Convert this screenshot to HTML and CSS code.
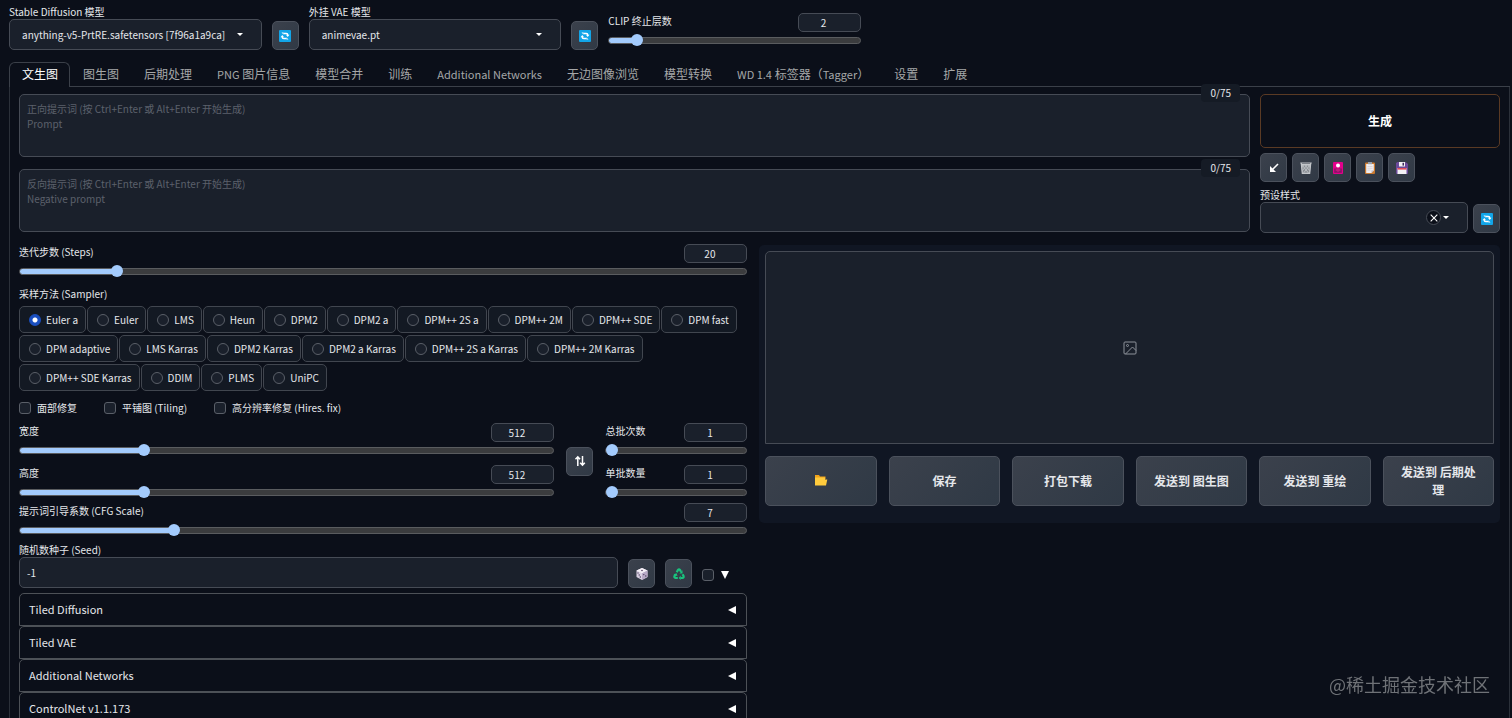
FILE: index.html
```
<!DOCTYPE html>
<html lang="zh-CN">
<head>
  <meta charset="UTF-8" />
  <meta name="viewport" content="width=device-width, initial-scale=1.0" />
  <title>Stable Diffusion</title>
  <link rel="stylesheet" href="styles.css">
</head>
<body>
  <!-- shared icons -->
  <svg class="sprite" aria-hidden="true">
    <symbol id="i-refresh" viewBox="0 0 12 12">
      <rect width="12" height="12" rx="1" fill="#12a5e8"/>
      <path d="M4.500 3.500h2.700a1.600 1.600 0 0 1 1.600 1.600M7.500 8.500H4.800a1.600 1.600 0 0 1-1.600-1.600" fill="none" stroke="#fff" stroke-width="1.400"/>
      <path d="M6.900 4.800h3.600L8.700 7zM1.500 7.200h3.600L3.300 5zM2.500 2.500h2v2zM9.500 9.500h-2v-2z" fill="#fff"/>
    </symbol>
  </svg>

  <header class="quick">
    <div class="field">
      <label for="model">Stable Diffusion 模型</label>
      <div class="select"><select id="model"><option>anything-v5-PrtRE.safetensors [7f96a1a9ca]</option></select></div>
    </div>
    <button class="tool" aria-label="刷新模型"><svg><use href="#i-refresh"/></svg></button>
    <div class="field">
      <label for="vae">外挂 VAE 模型</label>
      <div class="select"><select id="vae"><option>animevae.pt</option></select></div>
    </div>
    <button class="tool" aria-label="刷新 VAE"><svg><use href="#i-refresh"/></svg></button>
    <div class="slider clip">
      <label for="clip">CLIP 终止层数</label>
      <input class="num" type="number" value="2" aria-label="CLIP">
      <input id="clip" type="range" min="1" max="12" value="2" style="--fill: 10%">
    </div>
  </header>

  <nav class="tabs">
    <button class="tab active">文生图</button>
    <button class="tab">图生图</button>
    <button class="tab">后期处理</button>
    <button class="tab"><span class="latin">PNG</span> 图片信息</button>
    <button class="tab">模型合并</button>
    <button class="tab">训练</button>
    <button class="tab"><span class="latin">Additional Networks</span></button>
    <button class="tab">无边图像浏览</button>
    <button class="tab">模型转换</button>
    <button class="tab"><span class="latin">WD 1.4</span> 标签器（<span class="latin">Tagger</span>）</button>
    <button class="tab">设置</button>
    <button class="tab">扩展</button>
  </nav>

  <main class="panel">
    <section class="top">
      <div class="prompts">
        <div class="prompt">
          <textarea aria-label="正向提示词" placeholder="正向提示词 (按 Ctrl+Enter 或 Alt+Enter 开始生成)&#10;Prompt"></textarea>
          <span class="counter">0/75</span>
        </div>
        <div class="prompt">
          <textarea aria-label="反向提示词" placeholder="反向提示词 (按 Ctrl+Enter 或 Alt+Enter 开始生成)&#10;Negative prompt"></textarea>
          <span class="counter">0/75</span>
        </div>
      </div>

      <div class="actions">
        <button class="generate">生成</button>
        <div class="tools">
          <button class="tool" aria-label="读取参数">
            <svg viewBox="0 0 12 12"><path d="M10 2 4 8" fill="none" stroke="#fff" stroke-width="1.600"/><path d="M2 4v6h6z" fill="#fff"/></svg>
          </button>
          <button class="tool" aria-label="清空">
            <svg viewBox="0 0 12 12"><path d="M1 2h10l-1.200 9.500H2.200z" fill="#8b8f95"/><path d="M.3 1h11.400M1.200 2.600h9.600M1.300 1.500l1 9.800h7.400l1-9.800" fill="none" stroke="#c3c6ca" stroke-width="1.200"/><path d="M2 3l6.500 8M4.500 2.500l5 6M7.500 2.500l2.500 3M10 3l-6.500 8M7.500 2.500l-5 6M4.500 2.500L2 5.500" stroke="#c3c6ca" stroke-width=".8"/></svg>
          </button>
          <button class="tool" aria-label="附加网络">
            <svg viewBox="0 0 12 12"><rect x="1" width="10" height="12" rx="1" fill="#e3008c"/><rect x="2.200" y="6.500" width="7.600" height="4.300" fill="#8a1266"/><circle cx="6" cy="3.600" r="2" fill="#fff"/><path d="M3 8l3-2 3 2-3 2z" fill="#c2187e"/></svg>
          </button>
          <button class="tool" aria-label="套用样式">
            <svg viewBox="0 0 12 12"><rect x="1" y=".5" width="10" height="11.500" rx="1" fill="#c9792f"/><path d="M2.200 2h7.600v6.500L7.500 11H2.200z" fill="#f1eef0"/><path d="M7.500 11V8.500h2.300z" fill="#b9b4bd"/><rect x="4" width="4" height="2.200" fill="#9aa0a8"/><path d="M3.500 4.500h5M3.500 6.300h5M3.500 8.100h3" stroke="#cbc6ce" stroke-width=".6"/></svg>
          </button>
          <button class="tool" aria-label="保存样式">
            <svg viewBox="0 0 12 12"><path d="M1.500 0H9.500L12 2v9a1 1 0 0 1-1 1H1a1 1 0 0 1-1-1V1z" fill="#6b4a9a"/><rect x="3" width="6" height="4.500" fill="#f3f1f5"/><rect x="6.500" y=".8" width="1.500" height="2.800" fill="#3d2b5c"/><rect x="1.500" y="6" width="9" height="6" fill="#f3f1f5"/><rect x="1.500" y="6" width="9" height="1.600" fill="#e14b5a"/></svg>
          </button>
        </div>
        <div class="styles">
          <div class="field">
            <label for="preset">预设样式</label>
            <div class="select preset">
              <select id="preset"><option></option></select>
              <button class="clear" aria-label="清除"><svg viewBox="0 0 12 12"><path d="M1 1l10 10M11 1L1 11" stroke="#fff" stroke-width="1.600"/></svg></button>
            </div>
          </div>
          <button class="tool" aria-label="刷新样式"><svg><use href="#i-refresh"/></svg></button>
        </div>
      </div>
    </section>

    <section class="main">
      <div class="settings">
        <div class="slider steps">
          <label for="steps">迭代步数 (Steps)</label>
          <input class="num" type="number" value="20" aria-label="Steps">
          <input id="steps" type="range" min="1" max="150" value="20" style="--fill: 13%">
        </div>

        <fieldset class="sampler">
          <legend>采样方法 (Sampler)</legend>
          <div class="chips">
            <label><input type="radio" name="sampler" checked>Euler a</label>
            <label><input type="radio" name="sampler">Euler</label>
            <label><input type="radio" name="sampler">LMS</label>
            <label><input type="radio" name="sampler">Heun</label>
            <label><input type="radio" name="sampler">DPM2</label>
            <label><input type="radio" name="sampler">DPM2 a</label>
            <label><input type="radio" name="sampler">DPM++ 2S a</label>
            <label><input type="radio" name="sampler">DPM++ 2M</label>
            <label><input type="radio" name="sampler">DPM++ SDE</label>
            <label><input type="radio" name="sampler">DPM fast</label>
            <label><input type="radio" name="sampler">DPM adaptive</label>
            <label><input type="radio" name="sampler">LMS Karras</label>
            <label><input type="radio" name="sampler">DPM2 Karras</label>
            <label><input type="radio" name="sampler">DPM2 a Karras</label>
            <label><input type="radio" name="sampler">DPM++ 2S a Karras</label>
            <label><input type="radio" name="sampler">DPM++ 2M Karras</label>
            <label><input type="radio" name="sampler">DPM++ SDE Karras</label>
            <label><input type="radio" name="sampler">DDIM</label>
            <label><input type="radio" name="sampler">PLMS</label>
            <label><input type="radio" name="sampler">UniPC</label>
          </div>
        </fieldset>

        <div class="checks">
          <label><input type="checkbox">面部修复</label>
          <label><input type="checkbox">平铺图 (Tiling)</label>
          <label><input type="checkbox">高分辨率修复 (Hires. fix)</label>
        </div>

        <div class="size">
          <div class="stack">
            <div class="slider">
              <label for="width">宽度</label>
              <input class="num" type="number" value="512" aria-label="宽度">
              <input id="width" type="range" min="64" max="2048" value="512" style="--fill: 23%">
            </div>
            <div class="slider">
              <label for="height">高度</label>
              <input class="num" type="number" value="512" aria-label="高度">
              <input id="height" type="range" min="64" max="2048" value="512" style="--fill: 23%">
            </div>
          </div>
          <button class="tool" aria-label="交换宽高">
            <svg viewBox="0 0 12 12"><path d="M3.800 11V2M1.500 4.300l2.300-2.500 2.300 2.500M8.500 1v9M6.200 7.700l2.300 2.500 2.300-2.500" fill="none" stroke="#fff" stroke-width="1.500"/></svg>
          </button>
          <div class="stack">
            <div class="slider">
              <label for="count">总批次数</label>
              <input class="num" type="number" value="1" aria-label="总批次数">
              <input id="count" type="range" min="1" max="100" value="1" style="--fill: 0%">
            </div>
            <div class="slider">
              <label for="batch">单批数量</label>
              <input class="num" type="number" value="1" aria-label="单批数量">
              <input id="batch" type="range" min="1" max="8" value="1" style="--fill: 0%">
            </div>
          </div>
        </div>

        <div class="slider cfg">
          <label for="cfg">提示词引导系数 (CFG Scale)</label>
          <input class="num" type="number" value="7" aria-label="CFG Scale">
          <input id="cfg" type="range" min="1" max="30" value="7" style="--fill: 21%">
        </div>

        <div class="seed">
          <div class="field">
            <label for="seed">随机数种子 (Seed)</label>
            <input id="seed" type="text" value="-1">
          </div>
          <button class="tool" aria-label="随机种子">
            <svg viewBox="0 0 12 12"><path d="M6 0l5.500 2.500v6.500L6 12 .5 9V2.500z" fill="#d9d0e2"/><path d="M6 0l5.500 2.500L6 5.200.5 2.500z" fill="#f6f1f8"/><path d="M6 5.200l5.500-2.700v6.500L6 12z" fill="#b7a9c6"/><g fill="#4a3a5c"><circle cx="6" cy="2.500" r=".8"/><circle cx="2" cy="5" r=".7"/><circle cx="4.300" cy="9" r=".7"/><circle cx="3.200" cy="7" r=".7"/><circle cx="7.800" cy="6.600" r=".7"/><circle cx="9.800" cy="8" r=".7"/></g></svg>
          </button>
          <button class="tool" aria-label="重用种子">
            <svg viewBox="0 0 12 12"><g fill="none" stroke="#19c37d" stroke-width="2.200"><path d="M3.700 4.300L5 2q1-1.200 2 0l1 1.700"/><path d="M9.600 6.300l1 1.900q.4 1.600-1.200 1.800H7.500"/><path d="M4.800 10H2.500Q.9 9.600 1.500 8.100l1-1.700"/></g><path d="M9.500 2.200V5.400H6.400zM7.700 7.600v4.400L5.700 10zM.5 6.200l3.200-1 .8 3z" fill="#19c37d"/></svg>
          </button>
          <label class="extra"><input type="checkbox" aria-label="更多种子选项"><svg viewBox="0 0 8 8"><path d="M0 0h8L4 8z" fill="#fff"/></svg></label>
        </div>

        <div class="accordions">
          <button>Tiled Diffusion<svg viewBox="0 0 8 8"><path d="M8 0v8L0 4z" fill="#fff"/></svg></button>
          <button>Tiled VAE<svg viewBox="0 0 8 8"><path d="M8 0v8L0 4z" fill="#fff"/></svg></button>
          <button>Additional Networks<svg viewBox="0 0 8 8"><path d="M8 0v8L0 4z" fill="#fff"/></svg></button>
          <button>ControlNet v1.1.173<svg viewBox="0 0 8 8"><path d="M8 0v8L0 4z" fill="#fff"/></svg></button>
        </div>
      </div>

      <div class="output">
        <div class="gallery">
          <svg viewBox="0 0 14 14"><g fill="none" stroke="#8d929b"><rect x="1" y="1" width="12" height="12" rx="1"/><circle cx="4.500" cy="4.500" r="1"/><path d="M2.500 13l7-7L13 9.500"/></g></svg>
        </div>
        <div class="send">
          <button aria-label="打开文件夹"><svg viewBox="0 0 14 12"><path d="M1 1h4l1 1.500h5.500V5H1z" fill="#f2a31b"/><path d="M1 3.500h10v2h2.300L12 11.500H1z" fill="#ffcb3d"/></svg></button>
          <button>保存</button>
          <button>打包下载</button>
          <button>发送到 图生图</button>
          <button>发送到 重绘</button>
          <button>发送到 后期处理</button>
        </div>
      </div>
    </section>
  </main>

  <div class="watermark">@稀土掘金技术社区</div>
</body>
</html>
```
FILE: styles.css
```
* {
  box-sizing: border-box;
}
html {
  scrollbar-width: none;
}
body {
  margin: 0;
  padding: 3px 2px 0 9px;
  background: #0b0f19;
  color: #e5e7eb;
  font-family: "Noto Sans CJK SC", sans-serif;
  font-size: 10px;
  line-height: 15px;
}
button, input, select, textarea {
  font: inherit;
  color: inherit;
  margin: 0;
}
button {
  cursor: pointer;
  padding: 0;
}
.sprite {
  position: absolute;
  width: 0;
  height: 0;
}
.field {
  flex: 1;
  min-width: 0;
}
.field label, .slider label, legend {
  display: block;
  white-space: nowrap;
}

/* top bar */
.quick {
  display: grid;
  grid-template-columns: 1fr 27px 1fr 27px 1fr;
  column-gap: 10px;
  align-items: end;
  max-width: 852px;
  height: 47px;
}
.select {
  display: grid;
  align-items: center;
}
.select::after {
  content: "";
  grid-area: 1 / 1;
  justify-self: end;
  margin-right: 19px;
  border: 3px solid transparent;
  border-top-color: #fff;
  border-bottom: 0;
  pointer-events: none;
}
select, #seed, textarea {
  display: block;
  width: 100%;
  background: #1a202b;
  border: 1px solid #464b55;
  border-radius: 5px;
}
select {
  grid-area: 1 / 1;
  appearance: none;
  height: 31px;
  padding: 0 30px 1px 12px;
}
.tool {
  display: grid;
  place-items: center;
  width: 27px;
  height: 29px;
  background: linear-gradient(135deg, #3b414c, #303945);
  border: 1px solid #4b515c;
  border-radius: 5px;
}
.tool svg {
  width: 12px;
  height: 12px;
}

/* sliders */
.slider {
  display: grid;
  grid-template-columns: 1fr 63px;
  row-gap: 2px;
}
.clip {
  margin-bottom: 3px;
}
.num {
  width: 63px;
  height: 19px;
  padding: 0 12px 1px 0;
  text-align: center;
  background: #1a202b;
  border: 1px solid #464b55;
  border-radius: 5px;
  appearance: textfield;
}
.num::-webkit-inner-spin-button {
  display: none;
}
input[type="range"] {
  grid-column: 1 / 3;
  appearance: none;
  width: 100%;
  height: 13px;
  background: none;
}
input[type="range"]::-webkit-slider-runnable-track {
  height: 7px;
  border: 1px solid #5a5c5f;
  border-radius: 4px;
  background: linear-gradient(#a3cbfd, #a3cbfd) border-box 0 0 / var(--fill) 100% no-repeat, #3b3c3e;
}
input[type="range"]::-webkit-slider-thumb {
  appearance: none;
  width: 12px;
  height: 12px;
  margin-top: -4px;
  border-radius: 50%;
  background: #a3cbfd;
}

/* tabs */
.tabs {
  display: flex;
  margin-top: 12px;
  border-bottom: 1px solid #3b4049;
}
.tab {
  height: 25px;
  margin-bottom: -1px;
  padding: 0 11px 3px 12px;
  background: none;
  border: 1px solid transparent;
  border-bottom: 0;
  border-radius: 6px 6px 0 0;
  color: #a5a7a8;
  font-size: 12px;
  white-space: nowrap;
}
.tab.active {
  background: #0b0f19;
  border-color: #3b4049;
  color: #fff;
}
.latin {
  font-size: 11px;
}
.panel {
  padding: 7px 9px 0;
  border: solid #2b3039;
  border-width: 0 1px;
}

/* prompts */
.top {
  display: grid;
  grid-template-columns: 1fr 240px;
  gap: 10px;
}
.prompts {
  display: grid;
  gap: 12px;
  align-content: start;
}
.prompt {
  position: relative;
}
textarea {
  height: 63px;
  padding: 6px 7px;
  resize: none;
}
textarea::placeholder {
  color: #5c616b;
}
.counter {
  position: absolute;
  top: -10px;
  right: 10px;
  padding: 1px 9px;
  background: #151b25;
  border-radius: 4px;
  line-height: 16px;
}
.generate {
  width: 100%;
  height: 54px;
  padding-bottom: 2px;
  background: #0b0f19;
  border: 1px solid #5a3a24;
  border-radius: 5px;
  color: #fff;
  font-size: 12px;
  font-weight: 700;
}
.tools {
  display: flex;
  gap: 5px;
  margin: 5px 0;
}
.styles {
  display: flex;
  align-items: end;
  gap: 5px;
}
.clear {
  grid-area: 1 / 1;
  justify-self: end;
  display: grid;
  place-items: center;
  width: 15px;
  height: 15px;
  margin-right: 27px;
  background: #0b0f19;
  border: 1px solid #464b55;
  border-radius: 50%;
}
.clear svg {
  width: 8px;
  height: 8px;
}

/* settings */
.main {
  display: grid;
  grid-template-columns: 60fr 61fr;
  gap: 12px;
  margin-top: 12px;
}
.settings {
  min-width: 0;
  margin-top: -1px;
}
.sampler {
  margin: 8px 0 0;
  padding: 0;
  border: 0;
}
legend {
  padding: 0;
}
.chips {
  display: flex;
  flex-wrap: wrap;
  gap: 2px 1px;
  margin-top: 5px;
}
.chips label {
  display: flex;
  align-items: center;
  gap: 5px;
  height: 27px;
  padding: 0 7px 0 9px;
  background: #131923;
  border: 1px solid #41464f;
  border-radius: 5px;
  white-space: nowrap;
}
input[type="radio"], input[type="checkbox"] {
  appearance: none;
  width: 12px;
  height: 12px;
  background: #1a202b;
  border: 1px solid #5a5f68;
}
input[type="radio"] {
  border-radius: 50%;
}
input[type="radio"]:checked {
  background: radial-gradient(circle, #fff 2px, #1a4fc0 3px);
  border-color: #1a4fc0;
}
input[type="checkbox"] {
  border-radius: 3px;
}
.checks {
  display: flex;
  gap: 27px;
  margin-top: 9px;
}
.checks label {
  display: flex;
  align-items: center;
  gap: 6px;
}
.size {
  display: grid;
  grid-template-columns: 1fr 27px 142px;
  gap: 12px;
  align-items: center;
  margin-top: 8px;
}
.stack {
  display: grid;
  gap: 8px;
}
.cfg {
  margin-top: 4px;
}
.seed {
  display: flex;
  align-items: end;
  gap: 10px;
  margin-top: 5px;
}
#seed {
  height: 31px;
  padding: 0 7px;
}
.extra {
  display: flex;
  align-items: center;
  gap: 7px;
  width: 45px;
  height: 27px;
}
.extra svg {
  width: 8px;
  height: 8px;
}
.accordions {
  margin-top: 5px;
}
.accordions button {
  display: flex;
  align-items: center;
  justify-content: space-between;
  width: 100%;
  height: 33px;
  padding: 0 10px 0 9px;
  background: none;
  border: 1px solid #4d5157;
  border-radius: 5px 5px 0 0;
  font-size: 11px;
}
.accordions svg {
  width: 8px;
  height: 8px;
}

/* output */
.output {
  align-self: start;
  padding: 6px 6px 17px;
  background: #101623;
  border-radius: 5px;
}
.gallery {
  display: grid;
  place-items: center;
  height: 193px;
  background: #1a202b;
  border: 1px solid #464b55;
  border-radius: 5px 5px 0 0;
}
.gallery svg {
  width: 14px;
  height: 14px;
}
.send {
  display: grid;
  grid-template-columns: repeat(6, 1fr);
  gap: 12px;
  margin-top: 12px;
}
.send button {
  min-height: 50px;
  padding: 0 12px 1px;
  background: linear-gradient(135deg, #3b414c, #2f3945);
  border: 1px solid #4b515c;
  border-radius: 5px;
  font-size: 12px;
  font-weight: 700;
  line-height: 18px;
}
.send svg {
  width: 14px;
  height: 12px;
}

.watermark {
  position: fixed;
  right: 22px;
  bottom: 22px;
  color: #6f7277;
  font-size: 18px;
  line-height: 24px;
}
```
